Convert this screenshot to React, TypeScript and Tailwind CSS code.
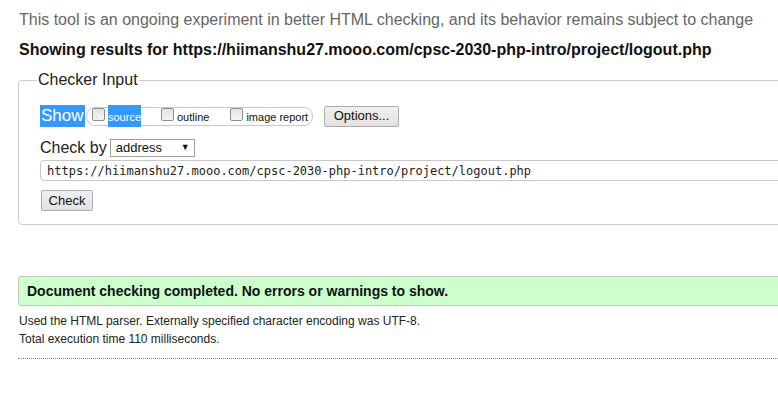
const sans = "font-['Liberation_Sans',Arial,sans-serif]";

function Box({ className = "" }: { className?: string }) {
  return (
    <span
      className={`mb-[3px] block h-[13px] w-[13px] shrink-0 rounded-[2px] border border-[#8f8f8f] bg-linear-to-b from-[#e4e4e4] to-[#f4f4f4] ${className}`}
    />
  );
}

const buttonClass =
  "flex items-center justify-center rounded-[2px] border border-[#adadad] bg-linear-to-b from-[#f0f0f0] to-[#e2e2e2] text-[13px] text-[#111]";

export default function App() {
  const url = "https://hiimanshu27.mooo.com/cpsc-2030-php-intro/project/logout.php";

  return (
    <div className={`w-[778px] overflow-hidden bg-white ${sans}`}>
      <div className="w-[820px] pl-[18px] pt-[10px] pb-[40px]">
        <p className="pl-[1px] text-[16px] leading-[20px] text-[#666]">
          This tool is an ongoing experiment in better HTML checking, and its behavior remains subject to change
        </p>
        <p className="mt-[10px] pl-[1px] text-[16px] font-bold leading-[20px] text-[#111]">
          Showing results for {url}
        </p>

        <fieldset className="mt-[10px] w-[790px] rounded-[4px] border border-[#cdcdcd] pb-[13px] pl-[21px]">
          <legend className="-ml-[3px] px-[1px] text-[16px] leading-[20px] text-[#222]">
            Checker Input
          </legend>

          <div className="mt-[15px] flex h-[22px] items-center">
            <span className="flex h-[22px] w-[45px] items-center bg-[#3399ff] pl-[1px] text-[17px] text-white">
              Show
            </span>
            <div className="ml-[1px] flex h-[19px] w-[227px] items-center rounded-[9px] border border-[#c8c8c8] pl-[5px] text-[11px] text-[#111]">
              <Box />
              <span className="ml-[3px] flex h-[22px] w-[33px] items-center justify-center bg-[#3399ff] pt-[2px] text-white">
                source
              </span>
              <Box className="ml-[20px]" />
              <span className="ml-[3px] pt-[2px]">outline</span>
              <Box className="ml-[21px]" />
              <span className="ml-[3px] pt-[2px]">image report</span>
            </div>
            <button type="button" className={`${buttonClass} ml-[11px] h-[21px] w-[75px]`}>
              Options...
            </button>
          </div>

          <div className="mt-[11px] flex h-[20px] items-center">
            <span className="text-[16px] leading-[20px] text-[#222]">Check by</span>
            <div className="ml-[3px] flex h-[18px] w-[85px] items-center justify-between border border-[#a0a0a0] pl-[5px] pr-[4px] text-[13px] text-[#111]">
              <span>address</span>
              <span className="text-[9px]">▼</span>
            </div>
          </div>

          <div className="mt-[2px] flex h-[21px] w-[800px] items-center rounded-[4px] border border-[#c8c8c8] pl-[6px] font-['DejaVu_Sans_Mono',monospace] text-[12px] text-[#222]">
            {url}
          </div>

          <button type="button" className={`${buttonClass} mt-[9px] ml-[1px] h-[21px] w-[52px]`}>
            Check
          </button>
        </fieldset>

        <div className="mt-[51px] flex h-[30px] w-[800px] items-center rounded-l-[3px] border border-[#c4c4c4] bg-[#ccffcc] pl-[8px] text-[14px] font-bold text-[#111]">
          Document checking completed. No errors or warnings to show.
        </div>

        <p className="mt-[6px] pl-[1px] text-[12px] leading-[18px] text-[#222]">
          Used the HTML parser. Externally specified character encoding was UTF-8.
        </p>
        <p className="pl-[1px] text-[12px] leading-[18px] text-[#222]">
          Total execution time 110 milliseconds.
        </p>
        <div className="mt-[10px] w-[800px] border-t border-dotted border-[#888]" />
      </div>
    </div>
  );
}
